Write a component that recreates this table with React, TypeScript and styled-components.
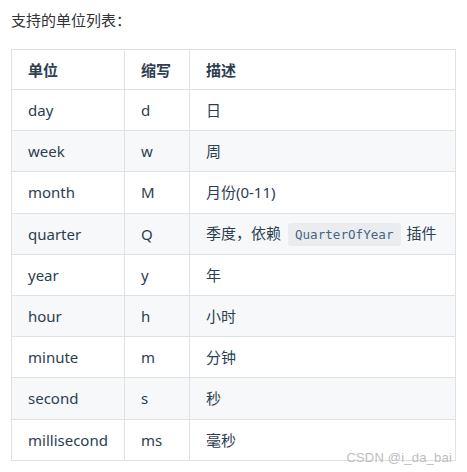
import styled, { createGlobalStyle } from 'styled-components';

const GlobalStyle = createGlobalStyle`
  html, body {
    margin: 0;
    padding: 0;
    background: #fff;
  }
  body {
    font-family: "Noto Sans", "Noto Sans CJK SC", sans-serif;
    color: #2c3e50;
  }
`;

const Page = styled.div`
  position: relative;
  width: 467px;
  height: 472px;
  padding: 9px 0 0 11px;
  box-sizing: border-box;
  overflow: hidden;
`;

const Intro = styled.p`
  margin: 0 0 18px;
  font-size: 15px;
  line-height: 22px;
  color: #333;
`;

const Table = styled.table`
  border-collapse: collapse;
  width: 445px;
  font-size: 15px;
`;

const Row = styled.tr<{ $striped?: boolean }>`
  background: ${(p) => (p.$striped ? '#f6f8fa' : '#fff')};
`;

const HeadCell = styled.th<{ $w?: number }>`
  border: 1px solid #dfe2e5;
  padding: 0 16px;
  height: 40px;
  text-align: left;
  font-weight: 700;
  width: ${(p) => (p.$w ? `${p.$w}px` : 'auto')};
  box-sizing: border-box;
`;

const Cell = styled.td`
  border: 1px solid #dfe2e5;
  padding: 0 16px;
  height: 40.2px;
  line-height: 20px;
  white-space: nowrap;
`;

const Code = styled.code`
  font-family: "DejaVu Sans Mono", "Liberation Mono", monospace;
  font-size: 12.6px;
  color: #476582;
  background: rgba(27, 31, 35, 0.05);
  border-radius: 3px;
  padding: 4px 7px;
  margin: 0 6px 0 7px;
`;

const Watermark = styled.div`
  position: absolute;
  right: 15px;
  bottom: 7px;
  font-family: "Liberation Sans", Arial, sans-serif;
  font-size: 13px;
  color: #bdbdbd;
  letter-spacing: 0.2px;
`;

type Unit = { name: string; short: string; desc: React.ReactNode };

const units: Unit[] = [
  { name: 'day', short: 'd', desc: '日' },
  { name: 'week', short: 'w', desc: '周' },
  { name: 'month', short: 'M', desc: '月份(0-11)' },
  {
    name: 'quarter',
    short: 'Q',
    desc: (
      <>
        季度，依赖<Code>QuarterOfYear</Code>插件
      </>
    ),
  },
  { name: 'year', short: 'y', desc: '年' },
  { name: 'hour', short: 'h', desc: '小时' },
  { name: 'minute', short: 'm', desc: '分钟' },
  { name: 'second', short: 's', desc: '秒' },
  { name: 'millisecond', short: 'ms', desc: '毫秒' },
];

const App = () => {
  return (
    <>
      <GlobalStyle />
      <Page>
        <Intro>支持的单位列表：</Intro>
        <Table>
          <thead>
            <Row>
              <HeadCell $w={112}>单位</HeadCell>
              <HeadCell $w={65}>缩写</HeadCell>
              <HeadCell>描述</HeadCell>
            </Row>
          </thead>
          <tbody>
            {units.map((u, i) => (
              <Row key={u.name} $striped={i % 2 === 1}>
                <Cell>{u.name}</Cell>
                <Cell>{u.short}</Cell>
                <Cell>{u.desc}</Cell>
              </Row>
            ))}
          </tbody>
        </Table>
        <Watermark>CSDN @i_da_bai</Watermark>
      </Page>
    </>
  );
};

export default App;
